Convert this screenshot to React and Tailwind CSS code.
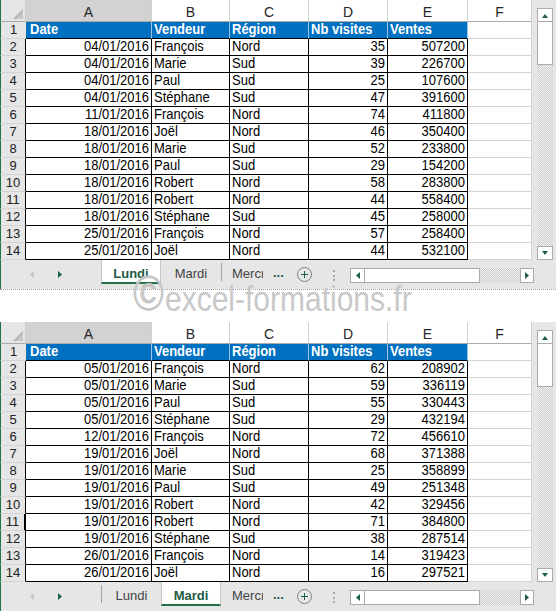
import React from "react";

const sheet1 = [
  ["04/01/2016", "François", "Nord", "35", "507200"],
  ["04/01/2016", "Marie", "Sud", "39", "226700"],
  ["04/01/2016", "Paul", "Sud", "25", "107600"],
  ["04/01/2016", "Stéphane", "Sud", "47", "391600"],
  ["11/01/2016", "François", "Nord", "74", "411800"],
  ["18/01/2016", "Joël", "Nord", "46", "350400"],
  ["18/01/2016", "Marie", "Sud", "52", "233800"],
  ["18/01/2016", "Paul", "Sud", "29", "154200"],
  ["18/01/2016", "Robert", "Nord", "58", "283800"],
  ["18/01/2016", "Robert", "Nord", "44", "558400"],
  ["18/01/2016", "Stéphane", "Sud", "45", "258000"],
  ["25/01/2016", "François", "Nord", "57", "258400"],
  ["25/01/2016", "Joël", "Nord", "44", "532100"],
];

const sheet2 = [
  ["05/01/2016", "François", "Nord", "62", "208902"],
  ["05/01/2016", "Marie", "Sud", "59", "336119"],
  ["05/01/2016", "Paul", "Sud", "55", "330443"],
  ["05/01/2016", "Stéphane", "Sud", "29", "432194"],
  ["12/01/2016", "François", "Nord", "72", "456610"],
  ["19/01/2016", "Joël", "Nord", "68", "371388"],
  ["19/01/2016", "Marie", "Sud", "25", "358899"],
  ["19/01/2016", "Paul", "Sud", "49", "251348"],
  ["19/01/2016", "Robert", "Nord", "42", "329456"],
  ["19/01/2016", "Robert", "Nord", "71", "384800"],
  ["19/01/2016", "Stéphane", "Sud", "38", "287514"],
  ["26/01/2016", "François", "Nord", "14", "319423"],
  ["26/01/2016", "Joël", "Nord", "16", "297521"],
];

const hatch =
  "bg-[image:repeating-conic-gradient(#cdcdcd_0_25%,#f2f2f2_0_50%)] bg-[length:2px_2px]";

function Tri({ dir, color = "#1f5f4a", size = 6 }) {
  const pts =
    dir === "up"
      ? "0,6 3,2 6,6"
      : dir === "down"
      ? "0,1 3,5 6,1"
      : dir === "left"
      ? "5,0 1,3.5 5,7"
      : "1,0 5,3.5 1,7";
  return (
    <svg width={size} height={size + 1} viewBox="0 0 6 7" className="block">
      <polygon points={pts} fill={color} />
    </svg>
  );
}

function T({ children }) {
  return <span className="inline-block scale-y-[1.12] origin-center">{children}</span>;
}

function ColHeaders() {
  const cols = [
    ["A", "w-[126px] bg-[#d2d2d2]"],
    ["B", "w-[78px]"],
    ["C", "w-[79px]"],
    ["D", "w-[79px]"],
    ["E", "w-[80px]"],
    ["F", "w-[64px]"],
  ];
  return (
    <div className="flex h-[22px]">
      <div className="w-[26px] border-l border-l-[#217346] border-b border-b-[#ababab] border-r border-r-[#cfcfcf] bg-[#e6e6e6] flex items-end justify-end pr-[2px] pb-[2px]">
        <svg width="10" height="10" viewBox="0 0 10 10">
          <polygon points="10,0 10,10 0,10" fill="#b5b5b5" />
          <polygon points="10,3 10,10 3,10" fill="#c9c9c9" />
        </svg>
      </div>
      {cols.map(([l, c]) => (
        <div
          key={l}
          className={`${c} border-r border-r-[#d0d0d0] border-b border-b-[#ababab] text-center text-[14px] leading-[16px] pt-[4px] text-[#262626]`}
        >
          {l}
        </div>
      ))}
    </div>
  );
}

function TitleRow() {
  const cells = [
    ["Date", "w-[126px] pl-[4px]"],
    ["Vendeur", "w-[78px] pl-[2px]"],
    ["Région", "w-[79px] pl-[2px]"],
    ["Nb visites", "w-[79px] pl-[2px]"],
    ["Ventes", "w-[80px] pl-[2px]"],
  ];
  return (
    <div className="flex h-[17px]">
      <div className="w-[26px] border-l border-l-[#217346] border-b border-b-[#d4d4d4] bg-[#e6e6e6] text-center text-[13px] leading-[16px] text-[#222]">
        1
      </div>
      {cells.map(([t, c]) => (
        <div
          key={t}
          className={`${c} bg-[#0070c0] text-white font-bold border-r border-r-[#9ec3e6] border-b border-b-black text-[13px] leading-[16px] whitespace-nowrap overflow-hidden`}
        >
          <T>{t}</T>
        </div>
      ))}
      <div className="w-[64px] border-r border-r-[#d4d4d4] border-b border-b-[#d4d4d4] bg-white" />
    </div>
  );
}

function DataRow({ n, r, mark }) {
  const txt = "text-[13px] leading-[16px] text-black whitespace-nowrap overflow-hidden";
  return (
    <div className="flex h-[17px]">
      <div
        className={`w-[26px] border-l border-l-[#217346] border-b border-b-[#d4d4d4] ${
          mark ? "border-r-2" : "border-r"
        } border-r-black bg-[#e6e6e6] text-center text-[13px] leading-[16px] text-[#222]`}
      >
        {n}
      </div>
      <div className={`w-[126px] border-r border-b border-black text-right pr-[2px] ${txt}`}><T>{r[0]}</T></div>
      <div className={`w-[78px] border-r border-b border-black pl-[2px] ${txt}`}><T>{r[1]}</T></div>
      <div className={`w-[79px] border-r border-b border-black pl-[2px] ${txt}`}><T>{r[2]}</T></div>
      <div className={`w-[79px] border-r border-b border-black text-right pr-[2px] ${txt}`}><T>{r[3]}</T></div>
      <div className={`w-[80px] border-r border-b border-black text-right pr-[2px] ${txt}`}><T>{r[4]}</T></div>
      <div className="w-[64px] border-r border-r-[#d4d4d4] border-b border-b-[#d4d4d4] bg-white" />
    </div>
  );
}

function VScroll() {
  return (
    <div className="w-[24px] h-[260px] bg-[#e6e6e6] flex flex-col pl-[5px] pr-[3px]">
      <div className="h-[8px]" />
      <div className="h-[14px] bg-white border border-[#ababab] flex items-center justify-center">
        <Tri dir="up" />
      </div>
      <div className="h-[43px] bg-white border border-t-0 border-[#ababab]" />
      <div className={`h-[181px] ${hatch}`} />
      <div className="h-[14px] bg-white border border-[#ababab] flex items-center justify-center">
        <Tri dir="down" />
      </div>
    </div>
  );
}

function TabBar({ active }) {
  const tabText = "text-[13px] leading-[16px] pt-[6px] text-center whitespace-nowrap";
  const activeTab = (label) => (
    <div className={`w-[60px] h-[24px] bg-white border-l border-r border-[#c6c6c6] border-b-2 border-b-[#217346] font-bold text-[#1c5a45] ${tabText}`}>
      {label}
    </div>
  );
  const idleTab = (label, w) => (
    <div className={`${w} h-[24px] text-[#444] ${tabText}`}>{label}</div>
  );
  const sep = <div className="w-[1px] h-[18px] mt-[3px] bg-[#a3a3a3]" />;
  return (
    <div className="flex h-[29px] bg-[#e6e6e6] border-l border-l-[#217346] font-['Liberation_Sans',Arial,sans-serif]">
      <div className="w-[100px] flex items-start pt-[11px]">
        <div className="ml-[28px]">
          <Tri dir="left" color="#c4c4c4" />
        </div>
        <div className="ml-[22px]">
          <Tri dir="right" color="#1f5f4a" />
        </div>
      </div>
      {active === 0 ? (
        <>
          {activeTab("Lundi")}
          {idleTab("Mardi", "w-[60px]")}
          {sep}
        </>
      ) : (
        <>
          {sep}
          {idleTab("Lundi", "w-[59px]")}
          {activeTab("Mardi")}
          <div className="w-[1px]" />
        </>
      )}
      <div className="w-[10px]" />
      <div className="w-[31px] overflow-hidden whitespace-nowrap text-[13px] leading-[16px] pt-[6px] text-[#444]">
        Mercredi
      </div>
      <div className="w-[10px]" />
      <div className="w-[12px] text-[13px] leading-[16px] pt-[5px] font-bold text-[#1f5f4a]">...</div>
      <div className="w-[12px]" />
      <div className="mt-[7px] w-[15px] h-[15px] rounded-full border border-[#808080] flex items-center justify-center">
        <svg width="9" height="9" viewBox="0 0 9 9">
          <rect x="4" y="1" width="1" height="7" fill="#1f5f4a" />
          <rect x="1" y="4" width="7" height="1" fill="#1f5f4a" />
        </svg>
      </div>
      <div className="w-[21px]" />
      <div className="mt-[10px] h-[11px] border-l-2 border-dotted border-[#a8a8a8]" />
      <div className="w-[15px]" />
      <div className="mt-[8px] flex h-[15px]">
        <div className="w-[15px] bg-white border border-[#ababab] flex items-center justify-center">
          <Tri dir="left" />
        </div>
        <div className="w-[115px] bg-white border border-l-0 border-[#ababab]" />
        <div className={`w-[40px] ${hatch}`} />
        <div className="w-[14px] bg-white border border-[#ababab] flex items-center justify-center">
          <Tri dir="right" />
        </div>
      </div>
    </div>
  );
}

function Sheet({ rows, active }) {
  return (
    <div className="font-['Liberation_Sans',Arial,sans-serif]">
      <div className="flex">
        <div className="w-[532px]">
          <ColHeaders />
          <TitleRow />
          {rows.map((r, i) => (
            <DataRow key={i} n={i + 2} r={r} mark={active === 1 && i + 2 === 11} />
          ))}
        </div>
        <VScroll />
      </div>
      <TabBar active={active} />
      <div className="h-[1px] border-b border-dotted border-[#a0a0a0]" />
    </div>
  );
}

export default function App() {
  return (
    <div className="w-[556px] h-[611px] bg-white overflow-hidden">
      <Sheet rows={sheet1} active={0} />
      <div className="h-[32px] bg-white flex items-end pl-[133px] text-[#c8c8c8] font-['Liberation_Sans',Arial,sans-serif]">
        <div className="flex items-baseline scale-y-[1.18] origin-bottom pb-[3px]">
          <span className="text-[42px] leading-[32px] font-bold">©</span>
          <span className="text-[30px] leading-[32px] ml-[1px]">excel-formations.fr</span>
        </div>
      </div>
      <Sheet rows={sheet2} active={1} />
    </div>
  );
}
